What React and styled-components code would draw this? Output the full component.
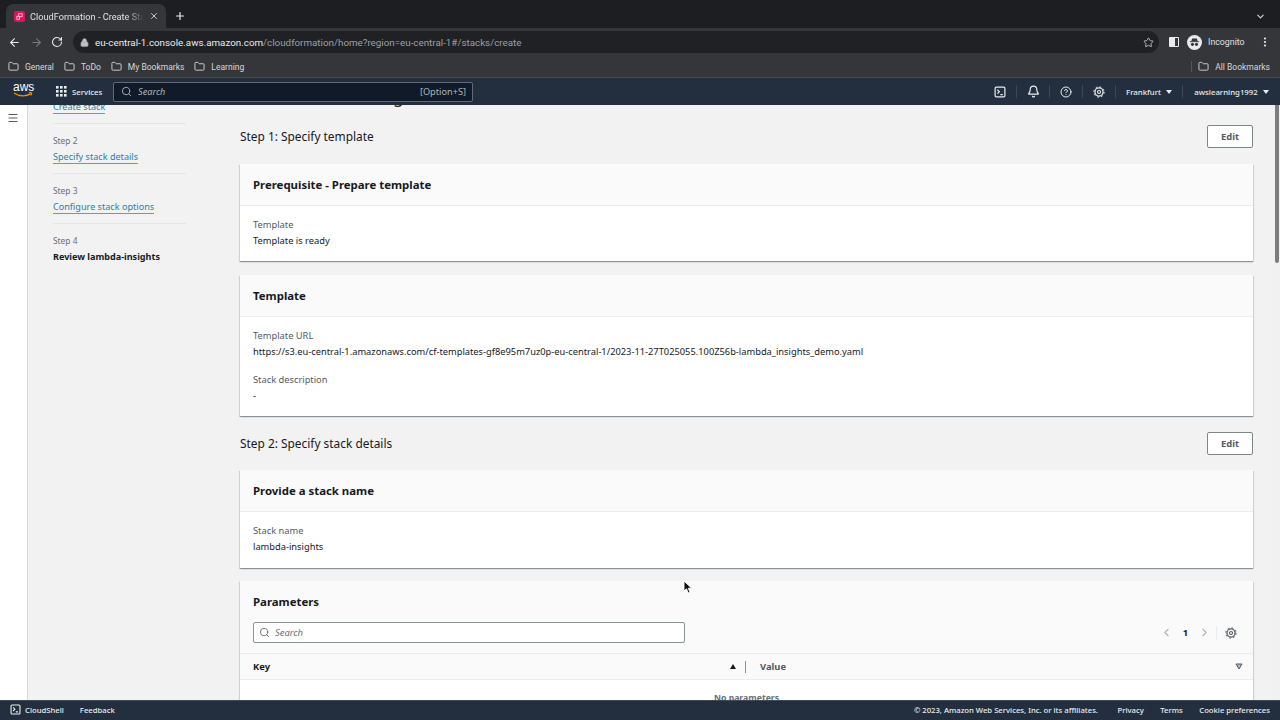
import React from 'react';
import styled, { createGlobalStyle } from 'styled-components';
import {
  ArrowLeft, ArrowRight, RotateCw, Lock, Star, Folder, X, Plus, ChevronDown, EllipsisVertical,
  Search, Bell, CircleHelp, Menu, ChevronLeft, ChevronRight,
} from 'lucide-react';

const GlobalStyle = createGlobalStyle`
  html, body { margin: 0; height: 100%; overflow: hidden; background: #f2f2f2; }
  body { font-family: "Noto Sans", "Open Sans", "Liberation Sans", sans-serif; color: #16191f; }
  * { box-sizing: border-box; }
`;

const Page = styled.div`
  position: relative;
  display: flex;
  flex-direction: column;
  height: 720px;
  width: 1280px;
  overflow: hidden;
`;

/* browser chrome */
const TabStrip = styled.div`
  height: 28px;
  background: #1d1e21;
  display: flex;
  align-items: flex-end;
  padding-left: 6px;
`;

const Tab = styled.div`
  width: 160px;
  height: 24px;
  background: #35363a;
  border-radius: 7px 7px 0 0;
  display: flex;
  align-items: center;
  padding: 0 7px 0 8px;
  gap: 5px;
  color: #dfe1e5;
  font-size: 9.2px;
  font-family: "Roboto", sans-serif;
`;

const Favicon = styled.div`
  width: 11px;
  height: 11px;
  border-radius: 2px;
  background: #d6175f;
  flex: none;
  display: flex;
  align-items: center;
  justify-content: center;
`;

const TabTitle = styled.span`
  flex: 1;
  overflow: hidden;
  white-space: nowrap;
  -webkit-mask-image: linear-gradient(to right, #000 85%, transparent);
  mask-image: linear-gradient(to right, #000 85%, transparent);
`;

const NewTab = styled.div`
  margin-left: 8px;
  height: 24px;
  display: flex;
  align-items: center;
  color: #e8eaed;
`;

const StripEnd = styled.div`
  margin-left: auto;
  height: 24px;
  padding-right: 14px;
  display: flex;
  align-items: center;
  color: #dfe1e5;
`;

const Toolbar = styled.div`
  height: 28px;
  background: #35363a;
  display: flex;
  align-items: center;
  padding-left: 8px;
  color: #e8eaed;
`;

const NavBtn = styled.div`
  width: ${p => p.$w || 21.5}px;
  display: flex;
  align-items: center;
  color: ${p => (p.$off ? '#77797d' : '#e8eaed')};
`;

const Omnibox = styled.div`
  margin-left: 6px;
  width: 1086px;
  height: 22px;
  border-radius: 11px;
  background: #202124;
  display: flex;
  align-items: center;
  padding: 0 5px 0 7px;
  font-family: "Roboto", sans-serif;
  font-size: 9.8px;
  color: #e8eaed;
`;

const Url = styled.span`
  margin-left: 6px;
  flex: 1;
`;

const UrlRest = styled.span`
  color: #9aa0a6;
`;

const SidePanelIcon = styled.div`
  margin-left: 10px;
  width: 10px;
  height: 10px;
  border: 1.5px solid #e8eaed;
  border-left-width: 6px;
  border-radius: 1px;
`;

const Profile = styled.div`
  margin-left: 8px;
  display: flex;
  align-items: center;
  gap: 6px;
  font-family: "Roboto", sans-serif;
  font-size: 8.8px;
  color: #dfe1e5;
  width: 71.5px;
`;

const Avatar = styled.div`
  width: 15px;
  height: 15px;
  border-radius: 50%;
  background: #e8eaed;
  display: flex;
  align-items: center;
  justify-content: center;
`;

const Bookmarks = styled.div`
  height: 22px;
  background: #35363a;
  border-bottom: 1px solid #4a4b4f;
  display: flex;
  align-items: center;
  padding-left: 8px;
  gap: 10px;
  font-family: "Roboto", sans-serif;
  font-size: 8.5px;
  color: #dfe1e5;
`;

const Bookmark = styled.div`
  display: flex;
  align-items: center;
  gap: 6px;
  color: #d6d8dc;
  ${p => p.$end && `
    margin-left: auto;
    padding: 0 10px 0 6px;
    border-left: 1px solid #54555a;
  `}
`;

/* aws top bar */
const TopBar = styled.div`
  height: 27px;
  background: #232f3e;
  display: flex;
  align-items: center;
  color: #eaeded;
  font-size: 7.8px;
  font-weight: 500;
`;

const Logo = styled.div`
  width: 44px;
  padding-left: 13px;
  display: flex;
  flex-direction: column;
  align-items: flex-start;
  color: #fff;
  font-family: "Liberation Sans", sans-serif;
  font-size: 12px;
  font-weight: 400;
  line-height: 9px;
  margin-top: -3px;
`;

const Services = styled.div`
  width: 69px;
  padding-left: 12px;
  display: flex;
  align-items: center;
  gap: 5px;
`;

const GlobalSearch = styled.div`
  width: 360px;
  height: 20px;
  background: #101a28;
  border: 1px solid #5f6b7a;
  border-radius: 2px;
  display: flex;
  align-items: center;
  padding: 0 6px 0 7px;
  gap: 6px;
  color: #aab7b8;
  font-weight: 400;
  font-size: 9.2px;
`;

const Hint = styled.span`
  margin-left: auto;
`;

const SearchWord = styled.span`
  font-style: italic;
`;

const TopActions = styled.div`
  margin-left: auto;
  display: flex;
  align-items: center;
  height: 100%;
`;

const TopAction = styled.div`
  width: ${p => p.$w || 33}px;
  height: 13px;
  border-right: 1px solid #3a4757;
  display: flex;
  align-items: center;
  justify-content: center;
  gap: 5px;
  ${p => p.$last && 'border-right: 0;'}
`;

const Caret = styled.span`
  width: 0;
  height: 0;
  border-left: 3px solid transparent;
  border-right: 3px solid transparent;
  border-top: 4px solid #eaeded;
`;

/* content area */
const Viewport = styled.div`
  flex: 1;
  min-height: 0;
  overflow: hidden;
  display: flex;
`;

const Rail = styled.div`
  width: 28px;
  flex: none;
  display: flex;
  align-items: flex-start;
  background: #fff;
  border-right: 1px solid #d5dbdb;
  padding: 7px 0 0 7px;
  color: #545b64;
`;

const Scrolled = styled.div`
  flex: 1;
  margin-top: -31px;
  display: flex;
  align-items: flex-start;
  padding-left: 25px;
`;

const SideNav = styled.nav`
  width: 133px;
  margin-right: 54px;
  flex: none;
`;

const NavItem = styled.div`
  padding: 9px 0 8px;
  height: 50px;
  border-bottom: 1px solid ${p => (p.$last ? 'transparent' : '#e4e7e7')};
`;

const StepLabel = styled.div`
  font-size: 8.4px;
  line-height: 16px;
  color: #687078;
`;

const StepLink = styled.a`
  display: block;
  width: fit-content;
  font-size: 9.1px;
  line-height: 13px;
  margin-top: 1px;
  color: #2c7fa8;
  border-bottom: 1px solid #5d9fc0;
`;

const StepCurrent = styled.div`
  font-size: 9.05px;
  line-height: 16px;
  font-weight: 700;
  color: #16191f;
`;

const Main = styled.main`
  width: 1013px;
  flex: none;
  padding-top: 6px;
`;

const PageTitle = styled.h1`
  margin: 0 0 11px;
  font-size: 17px;
  line-height: 34px;
  font-weight: 400;
`;

const SectionRow = styled.div`
  height: 22px;
  margin: ${p => (p.$first ? '0 0 17px' : '16px 0')};
  display: flex;
  align-items: center;
  justify-content: space-between;
`;

const SectionTitle = styled.h2`
  margin: 0;
  font-size: 11.9px;
  font-weight: 400;
`;

const EditButton = styled.button`
  width: 46px;
  height: 23px;
  background: #fff;
  border: 1px solid #7d8689;
  border-radius: 2px;
  font: 700 9.4px "Noto Sans", sans-serif;
  color: #545b64;
`;

const Card = styled.section`
  background: #fff;
  box-shadow: 0 1px 1px 0 rgba(0, 28, 36, 0.3), 1px 1px 1px 0 rgba(0, 28, 36, 0.1), -1px 1px 1px 0 rgba(0, 28, 36, 0.1);
  margin-bottom: ${p => p.$gap || 14}px;
`;

const CardHead = styled.header`
  height: ${p => p.$h || 42}px;
  background: #fafafa;
  border-bottom: 1px solid ${p => (p.$flat ? 'transparent' : '#eaeded')};
  padding: ${p => (p.$flat ? '1px 13px 0' : '0 13px 1px')};
  display: flex;
  align-items: center;
`;

const CardTitle = styled.h3`
  margin: 0;
  font-size: 11.4px;
  font-weight: 700;
`;

const CardBody = styled.div`
  padding: 11px 13px ${p => p.$pb || 12}px;
`;

const Field = styled.div`
  & + & {
    margin-top: 12px;
  }
`;

const FieldLabel = styled.div`
  font-size: 9.3px;
  line-height: 16px;
  color: #545b64;
`;

const FieldValue = styled.div`
  font-size: 9.3px;
  line-height: 16px;
  color: #16191f;
`;

const ParamsTools = styled.div`
  background: #fafafa;
  padding: 0 16px 10px 13px;
  display: flex;
  align-items: center;
`;

const ParamSearch = styled.div`
  width: 432px;
  height: 21px;
  background: #fff;
  border: 1px solid #879596;
  border-radius: 2px;
  display: flex;
  align-items: center;
  padding-left: 5px;
  gap: 5px;
  color: #687078;
  font-size: 9.4px;
`;

const Pager = styled.div`
  margin-left: auto;
  display: flex;
  align-items: center;
  color: #aab7b8;
`;

const PageNo = styled.span`
  font-size: 9.4px;
  font-weight: 700;
  color: #16191f;
  margin: 0 10px;
`;

const PagerDivider = styled.span`
  width: 1px;
  height: 14px;
  background: #eaeded;
  margin: 0 8px 0 5px;
`;

const PagerGear = styled.span`
  display: flex;
  color: #545b64;
`;

const HeaderRow = styled.div`
  height: 27px;
  background: #fafafa;
  border-top: 1px solid #eaeded;
  border-bottom: 1px solid #eaeded;
  display: grid;
  grid-template-columns: 506px 1fr;
  font-size: 9.4px;
  font-weight: 700;
  align-items: center;
`;

const KeyCell = styled.div`
  display: flex;
  align-items: center;
  padding-left: 13px;
  justify-content: space-between;
`;

const ValueCell = styled.div`
  display: flex;
  align-items: center;
  padding: 0 10px 0 14px;
  justify-content: space-between;
  color: #545b64;
`;

const SortUp = styled.span`
  width: 0;
  height: 0;
  border-left: 3.5px solid transparent;
  border-right: 3.5px solid transparent;
  border-bottom: 5px solid #16191f;
`;

const HeaderDivider = styled.span`
  width: 1px;
  height: 12px;
  background: #879596;
  margin-left: 9px;
`;

const KeyEnd = styled.span`
  display: flex;
  align-items: center;
`;

const EmptyRow = styled.div`
  background: #fff;
  padding-top: 10px;
  height: 60px;
  text-align: center;
  font-size: 8.7px;
  line-height: 16px;
  font-weight: 700;
  color: #687078;
`;

const ScrollTrack = styled.div`
  width: 7px;
  flex: none;
  margin-left: auto;
  background: #f1f1f1;
`;

const ScrollThumb = styled.div`
  margin: 0 1px 0 2px;
  height: 158px;
  border-radius: 0 0 3px 3px;
  background: #7d7d7d;
`;

const Footer = styled.footer`
  height: 20px;
  background: #232f3e;
  border-top: 1px solid #3c4a5a;
  display: flex;
  align-items: center;
  padding: 0 10px 2px;
  color: #eaeded;
  font-size: 7.7px;
  font-weight: 500;
`;

const ShellLink = styled.span`
  display: flex;
  align-items: center;
  gap: 4px;
  margin-right: 16px;
`;

const FooterRight = styled.div`
  margin-left: auto;
  display: flex;
  gap: 16.5px;
`;

const Copyright = styled.span`
  margin-right: 3px;
`;

const Cursor = styled.svg`
  position: absolute;
  left: 683px;
  top: 580px;
`;

const ShellIcon = ({ size = 12 }) => (
  <svg width={size} height={size} viewBox="0 0 16 16" fill="none" stroke="currentColor" strokeWidth="1.6">
    <rect x="1.5" y="1.5" width="13" height="13" rx="1.5" />
    <path d="M4.5 5l2.6 2.6L4.5 10.2M8.5 11.5h3.2" />
  </svg>
);

const GearIcon = ({ size = 12 }) => (
  <svg width={size} height={size} viewBox="0 0 16 16" fill="none" stroke="currentColor">
    <circle cx="8" cy="8" r="5.4" strokeWidth="1.7" />
    <circle cx="8" cy="8" r="6.9" strokeWidth="1.3" strokeDasharray="2.4 3" />
    <circle cx="8" cy="8" r="2" strokeWidth="1.5" />
  </svg>
);

const GridIcon = () => (
  <svg width="11" height="11" viewBox="0 0 11 11" fill="currentColor">
    {[0, 4, 8].map(y => [0, 4, 8].map(x => <rect key={`${x}-${y}`} x={x} y={y} width="2.6" height="2.6" />))}
  </svg>
);

const SortDownOutline = () => (
  <svg width="8" height="7" viewBox="0 0 8 7" fill="#aab7b8" stroke="#545b64" strokeWidth="1">
    <path d="M1 1h6L4 6z" />
  </svg>
);

const Bookmarked = ({ children, end }) => (
  <Bookmark $end={end}>
    <Folder size={11} />
    {children}
  </Bookmark>
);

const Step = ({ label, children, last }) => (
  <NavItem $last={last}>
    <StepLabel>{label}</StepLabel>
    {children}
  </NavItem>
);

export default function App() {
  return (
    <Page>
      <GlobalStyle />
      <TabStrip>
        <Tab>
          <Favicon>
            <svg width="7" height="7" viewBox="0 0 8 8" fill="none" stroke="#f7c6d9" strokeWidth="1">
              <rect x="3" y="0.8" width="4" height="3.4" />
              <rect x="1" y="3.8" width="3" height="3.4" />
            </svg>
          </Favicon>
          <TabTitle>CloudFormation - Create Stack</TabTitle>
          <X size={10} />
        </Tab>
        <NewTab><Plus size={12} strokeWidth={2.4} /></NewTab>
        <StripEnd><ChevronDown size={11} strokeWidth={2.2} /></StripEnd>
      </TabStrip>

      <Toolbar>
        <NavBtn><ArrowLeft size={13} /></NavBtn>
        <NavBtn $off><ArrowRight size={13} /></NavBtn>
        <NavBtn $w={16}><RotateCw size={12} strokeWidth={2.2} /></NavBtn>
        <Omnibox>
          <Lock size={9} color="#bdc1c6" fill="#bdc1c6" />
          <Url>eu-central-1.console.aws.amazon.com<UrlRest>/cloudformation/home?region=eu-central-1#/stacks/create</UrlRest></Url>
          <Star size={11} color="#bdc1c6" />
        </Omnibox>
        <SidePanelIcon />
        <Profile>
          <Avatar>
            <svg width="11" height="11" viewBox="0 0 12 12" fill="#35363a">
              <path d="M3.5 1.5h5l1 3h-7z" />
              <rect x="1" y="4.6" width="10" height="1" />
              <circle cx="3.8" cy="8" r="1.7" />
              <circle cx="8.2" cy="8" r="1.7" />
            </svg>
          </Avatar>
          Incognito
        </Profile>
        <EllipsisVertical size={12} strokeWidth={2.4} />
      </Toolbar>

      <Bookmarks>
        <Bookmarked>General</Bookmarked>
        <Bookmarked>ToDo</Bookmarked>
        <Bookmarked>My Bookmarks</Bookmarked>
        <Bookmarked>Learning</Bookmarked>
        <Bookmarked end>All Bookmarks</Bookmarked>
      </Bookmarks>

      <TopBar>
        <Logo>
          aws
          <svg width="20" height="6" viewBox="0 0 20 6" fill="none">
            <path d="M1 1c5 3.6 12 3.6 17 .6" stroke="#f29100" strokeWidth="1.3" />
            <path d="M15.8.6l3 .2-.8 2.8" stroke="#f29100" strokeWidth="1" />
          </svg>
        </Logo>
        <Services><GridIcon />Services</Services>
        <GlobalSearch>
          <Search size={11} />
          <SearchWord>Search</SearchWord>
          <Hint>[Option+S]</Hint>
        </GlobalSearch>
        <TopActions>
          <TopAction><ShellIcon /></TopAction>
          <TopAction><Bell size={13} strokeWidth={2.2} /></TopAction>
          <TopAction><CircleHelp size={12} strokeWidth={2} /></TopAction>
          <TopAction><GearIcon /></TopAction>
          <TopAction $w={67}>Frankfurt <Caret /></TopAction>
          <TopAction $w={97} $last>awslearning1992 <Caret /></TopAction>
        </TopActions>
      </TopBar>

      <Viewport>
        <Rail><Menu size={12} strokeWidth={2} /></Rail>
        <Scrolled>
          <SideNav>
            <Step label="Step 1"><StepLink>Create stack</StepLink></Step>
            <Step label="Step 2"><StepLink>Specify stack details</StepLink></Step>
            <Step label="Step 3"><StepLink>Configure stack options</StepLink></Step>
            <Step label="Step 4" last><StepCurrent>Review lambda-insights</StepCurrent></Step>
          </SideNav>
          <Main>
            <PageTitle>Review lambda-insights</PageTitle>

            <SectionRow $first>
              <SectionTitle>Step 1: Specify template</SectionTitle>
              <EditButton>Edit</EditButton>
            </SectionRow>
            <Card>
              <CardHead><CardTitle>Prerequisite - Prepare template</CardTitle></CardHead>
              <CardBody>
                <Field>
                  <FieldLabel>Template</FieldLabel>
                  <FieldValue>Template is ready</FieldValue>
                </Field>
              </CardBody>
            </Card>
            <Card $gap={1}>
              <CardHead><CardTitle>Template</CardTitle></CardHead>
              <CardBody>
                <Field>
                  <FieldLabel>Template URL</FieldLabel>
                  <FieldValue>https://s3.eu-central-1.amazonaws.com/cf-templates-gf8e95m7uz0p-eu-central-1/2023-11-27T025055.100Z56b-lambda_insights_demo.yaml</FieldValue>
                </Field>
                <Field>
                  <FieldLabel>Stack description</FieldLabel>
                  <FieldValue>-</FieldValue>
                </Field>
              </CardBody>
            </Card>

            <SectionRow>
              <SectionTitle>Step 2: Specify stack details</SectionTitle>
              <EditButton>Edit</EditButton>
            </SectionRow>
            <Card $gap={13}>
              <CardHead><CardTitle>Provide a stack name</CardTitle></CardHead>
              <CardBody $pb={13}>
                <Field>
                  <FieldLabel>Stack name</FieldLabel>
                  <FieldValue>lambda-insights</FieldValue>
                </Field>
              </CardBody>
            </Card>
            <Card>
              <CardHead $h={41} $flat><CardTitle>Parameters</CardTitle></CardHead>
              <ParamsTools>
                <ParamSearch>
                  <Search size={11} />
                  <SearchWord>Search</SearchWord>
                </ParamSearch>
                <Pager>
                  <ChevronLeft size={13} />
                  <PageNo>1</PageNo>
                  <ChevronRight size={13} />
                  <PagerDivider />
                  <PagerGear><GearIcon /></PagerGear>
                </Pager>
              </ParamsTools>
              <HeaderRow>
                <KeyCell>
                  Key
                  <KeyEnd><SortUp /><HeaderDivider /></KeyEnd>
                </KeyCell>
                <ValueCell>
                  Value
                  <SortDownOutline />
                </ValueCell>
              </HeaderRow>
              <EmptyRow>No parameters</EmptyRow>
            </Card>
          </Main>
        </Scrolled>
        <ScrollTrack><ScrollThumb /></ScrollTrack>
      </Viewport>

      <Footer>
        <ShellLink><ShellIcon size={11} />CloudShell</ShellLink>
        <span>Feedback</span>
        <FooterRight>
          <Copyright>© 2023, Amazon Web Services, Inc. or its affiliates.</Copyright>
          <span>Privacy</span>
          <span>Terms</span>
          <span>Cookie preferences</span>
        </FooterRight>
      </Footer>

      <Cursor width="10" height="14" viewBox="0 0 10 14">
        <path d="M1 1v10l2.5-2.2L5.2 13l1.8-.8-1.7-4H8.6z" fill="#111" stroke="#fff" strokeWidth="0.9" />
      </Cursor>
    </Page>
  );
}
